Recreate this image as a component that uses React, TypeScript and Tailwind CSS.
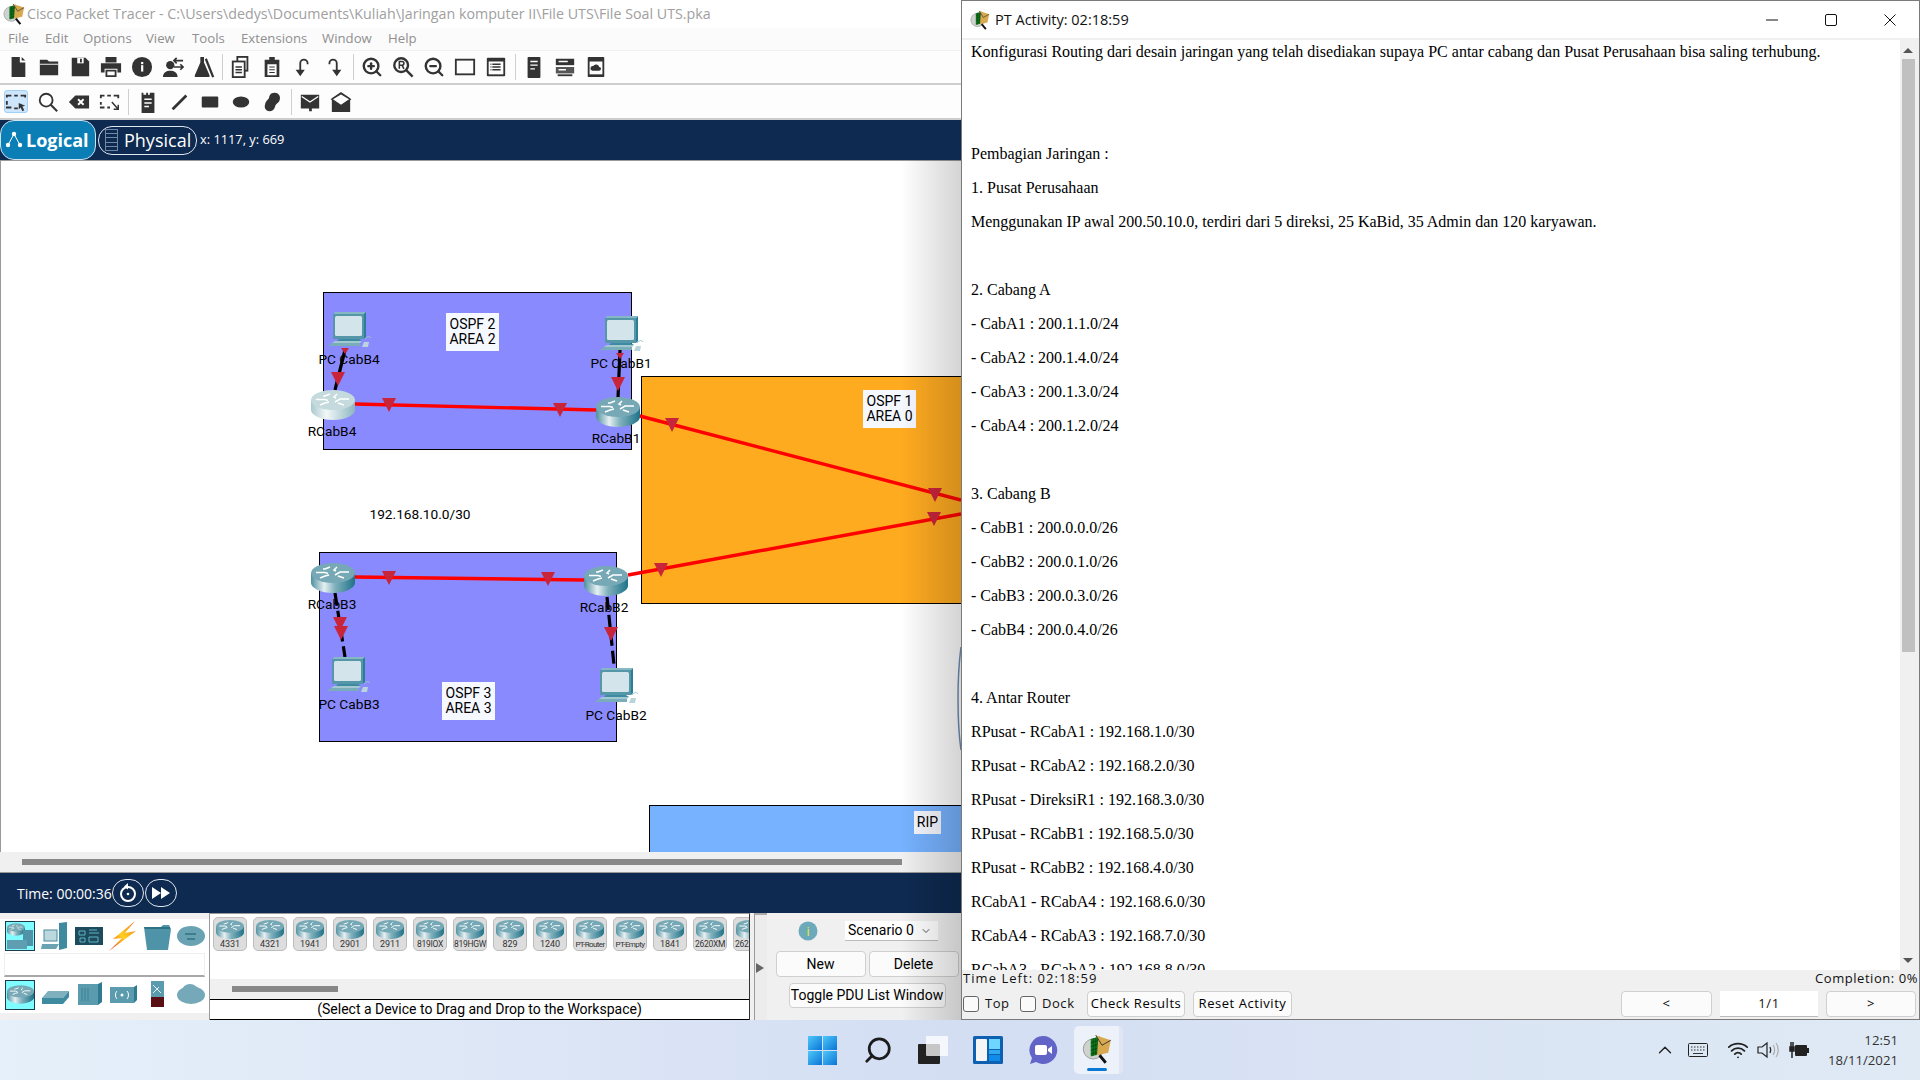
import React from "react";
import { ZoomIn, ZoomOut, Search, ChevronDown, ChevronUp, Wifi } from "lucide-react";

const D = "#333333";

function Router({ w = 44, h = 30, light = false }: { w?: number; h?: number; light?: boolean }) {
  return (
    <svg width={w} height={h} viewBox="0 0 44 30" className="block">
      <path d="M0 10v10c0 5 10 10 22 10s22-5 22-10V10z" fill={light ? "url(#rbl)" : "url(#rb)"} />
      <ellipse cx="22" cy="10" rx="22" ry="10" fill={light ? "#c4dadd" : "#76a9b5"} />
      <g stroke="#fff" strokeWidth="1.5" fill="none">
        <path d="M5 9.5h9l3 1" />
        <path d="M24 12l5-3h9" />
        <path d="M9 15l5-2 4-1" />
        <path d="M26 4l-3 3 2 1" />
        <path d="M19 4l-5 2h-2" />
        <path d="M27 13l6 2" />
      </g>
    </svg>
  );
}

function Pc() {
  return (
    <svg width="44" height="36" viewBox="0 0 44 36" className="block">
      <path d="M7 0h31l-2 2H6z" fill="#86b8c4" />
      <path d="M36 2l2-2v25l-2 2z" fill="#2b7f95" />
      <rect x="5" y="2" width="31" height="25" fill="#5596a9" />
      <rect x="7" y="4" width="27" height="20" rx="1.5" fill="#d3e4ea" />
      <path d="M11 27h20l3 2H9z" fill="#3d8ba0" />
      <path d="M7 29h27l-2 2H4z" fill="#a4c8d1" />
      <path d="M4 31h28v3H0z" fill="#79adba" />
      <path d="M37 27c2-3 5-3 6-1" stroke="#9cc3cd" strokeWidth="1" fill="none" />
      <path d="M36 30h5l-1 5h-6z" fill="#b9d4db" />
    </svg>
  );
}

function PtLogo({ s = 24 }: { s?: number }) {
  return (
    <svg width={s} height={s} viewBox="0 0 48 48" className="block">
      <circle cx="18" cy="24" r="16" fill="#cfd3cf" stroke="#9a9a9a" strokeWidth="1.5" />
      <path d="M14 8l14-4v28l-14 4z" fill="#0e7a1e" />
      <g stroke="#0a3b10" strokeWidth="1">
        <path d="M14 14l14-4M14 20l14-4M14 26l14-4M14 32l14-4M18 7v28M22 6v28M26 5v28" />
      </g>
      <path d="M22 2l24 8-4 20-18 4 2-26z" fill="#d8a94e" />
      <path d="M22 2l10 16 14-8" fill="none" stroke="#333" strokeWidth="1.5" />
      <path d="M28 34l10 12" stroke="#111" strokeWidth="4.5" />
    </svg>
  );
}

function Ico({ n }: { n: string }) {
  const white = "#fdfdfd";
  const c: Record<string, React.ReactNode> = {
    file: <path d="M5 1h9v6h6v16H5zM16 1l4 4h-4z" fill={D} />,
    folder: <><path d="M2 4h8l2 2h10v15H2z" fill={D} /><path d="M2 9h20" stroke={white} strokeWidth="1" /></>,
    save: <><path d="M3 2h15l4 4v16H3z" fill={D} /><rect x="9" y="2" width="7" height="6" fill={white} /><rect x="12" y="3" width="2" height="4" fill={D} /></>,
    print: <><path d="M6 1h12v6H6zM1 8h22v10h-4v-4H5v4H1z" fill={D} /><path d="M6 15h12v8H6zM8 17v4h8v-4z" fill={D} fillRule="evenodd" /></>,
    info: <><circle cx="12" cy="12" r="11" fill={D} /><rect x="11" y="10" width="2.4" height="7" fill={white} /><rect x="11" y="6.5" width="2.4" height="2.4" fill={white} /></>,
    user: <><circle cx="9" cy="10" r="4.5" fill={D} /><path d="M1 23c0-5 4-7 8-7s8 2 8 7z" fill={D} /><path d="M13 5h10M16 2l-3 3 3 3M13 12h10M20 9l3 3-3 3" stroke={D} strokeWidth="1.8" fill="none" /></>,
    flask: <><path d="M8 1h4v6l6 14v2H2v-2L8 7z" fill={D} /><path d="M14 3l8 20" stroke={D} strokeWidth="2.5" /></>,
    copy: <><rect x="8" y="1" width="11" height="15" fill="none" stroke={D} strokeWidth="2" /><rect x="3" y="6" width="13" height="17" fill={white} stroke={D} strokeWidth="2" /><path d="M6 12h7M6 15h7M6 18h7" stroke={D} strokeWidth="1.5" /></>,
    paste: <><path d="M4 4h5V1h6v3h5v19H4z" fill={D} /><rect x="7" y="9" width="10" height="12" fill={white} /><path d="M9 12h6M9 15h6M9 18h6" stroke={D} strokeWidth="1.3" /></>,
    undo: <><path d="M9 16V8a4 4 0 0 1 8 0v1" stroke={D} strokeWidth="2" fill="none" /><path d="M4 15h10l-5 7z" fill={D} /></>,
    redo: <><path d="M15 16V8a4 4 0 0 0-8 0v1" stroke={D} strokeWidth="2" fill="none" /><path d="M10 15h10l-5 7z" fill={D} /></>,
    zr: <><circle cx="10" cy="10" r="7.5" fill="none" stroke={D} strokeWidth="2.6" /><path d="M15.5 15.5l7 7" stroke={D} strokeWidth="2.6" /><path d="M8 14V6h3a2 2 0 0 1 0 4H8M11 10l2 4" stroke={D} strokeWidth="1.7" fill="none" /></>,
    win: <rect x="2" y="4" width="20" height="16" fill="none" stroke={D} strokeWidth="2" />,
    list: <><rect x="2" y="2" width="20" height="20" rx="1" fill={D} /><rect x="4" y="6" width="16" height="14" fill={white} /><path d="M8 9h9M8 12h9M8 15h9M6 9h1M6 12h1M6 15h1" stroke={D} strokeWidth="1.5" /></>,
    server: <><rect x="5" y="1" width="14" height="23" rx="1" fill={D} /><path d="M8 6h8M8 10h8M8 14h5" stroke={white} strokeWidth="1.5" /></>,
    stack: <><rect x="2" y="3" width="20" height="7" fill={D} /><rect x="2" y="12" width="20" height="7" fill="#555" /><path d="M5 6h10M5 15h8" stroke={white} strokeWidth="1.5" /><rect x="4" y="20" width="16" height="2" fill={D} /></>,
    cloud: <><rect x="3" y="1" width="18" height="22" rx="1" fill={D} /><rect x="5" y="6" width="14" height="14" fill={white} /><path d="M8 16a2.5 2.5 0 0 1 1-5 3.5 3.5 0 0 1 6.5 1 2 2 0 0 1 0 4z" fill={D} /></>,
    sel: <><path d="M2 7V5h5M10 5h4M17 5h5v2M2 11v4M2 19v-1h5M10 19h4" stroke={D} strokeWidth="2" fill="none" /><path d="M15 13l7 3-3 1 2 4-2 1-2-4-2 2z" fill={D} /></>,
    mag: <><circle cx="10" cy="10" r="7" fill="none" stroke={D} strokeWidth="2" /><path d="M15 15l7 7" stroke={D} strokeWidth="2.2" /></>,
    del: <><path d="M1 12l7-7h15v14H8z" fill={D} /><path d="M11 9l6 6M17 9l-6 6" stroke={white} strokeWidth="2" /></>,
    rsz: <><path d="M2 8V5h4M9 5h4M16 5h5v3M2 12v3M2 19v-1h4M9 18h3" stroke={D} strokeWidth="2" fill="none" /><path d="M14 12l7 8M21 15v5h-5" stroke={D} strokeWidth="1.6" fill="none" /></>,
    note: <><path d="M5 2h2v2h3V2h2v2h2V2h5v22H5z" fill={D} /><path d="M8 9h8M8 13h8M8 17h5" stroke={white} strokeWidth="1.6" /></>,
    line: <path d="M5 20L20 5" stroke={D} strokeWidth="3" />,
    rect: <rect x="3" y="6" width="18" height="12" rx="1" fill={D} />,
    oval: <ellipse cx="12" cy="12" rx="9" ry="6" fill={D} />,
    blob: <path d="M15 2c5 0 7 5 5 9-2 3-4 3-5 7-1 4-6 5-9 3-3-2-2-7 0-10 2-2 3-3 3-5 1-3 3-4 6-4z" fill={D} />,
    mail: <><path d="M2 4h20v15h-8v3h-3v-3H2z" fill={D} /><path d="M3 6l9 6 9-6" stroke={white} strokeWidth="1.5" fill="none" /></>,
    open: <><path d="M12 1l10 7v15H2V8z" fill={D} /><path d="M2 9l10 7 10-7-10-6z" fill={white} stroke={D} strokeWidth="1.5" /></>,
  };
  return <svg width="22" height="22" viewBox="0 0 24 24">{c[n]}</svg>;
}

function T({ n }: { n: string }) {
  return (
    <div className="w-[31px] h-[26px] flex items-center justify-center shrink-0">
      {n === "zi" ? <ZoomIn size={22} color={D} strokeWidth={2.6} /> : n === "zo" ? <ZoomOut size={22} color={D} strokeWidth={2.6} /> : <Ico n={n} />}
    </div>
  );
}

function MiniCat({ n }: { n: string }) {
  const m: Record<string, React.ReactNode> = {
    set: <><path d="M18 2l8-1v26l-8 2z" fill="#3e8ba0" /><rect x="3" y="9" width="13" height="11" fill="#bcd8df" stroke="#4a8a9c" /><path d="M1 23h17l-3 5H0z" fill="#6aa4b3" /></>,
    board: <><rect x="0" y="6" width="28" height="18" fill="#1d4b5c" /><path d="M4 10h6v4H4zM14 9h8M14 12h10M5 17h5v4H5zM14 16h9v5h-9z" stroke="#5fb3c6" fill="none" /></>,
    bolt: <path d="M26 0L4 18l9-1L0 30l27-20-11 2z" fill="url(#bolt)" />,
    fold: <><path d="M1 6h17l2-2h6l2 4-3 21H4z" fill="#4f93a8" /><path d="M1 6h26v2H2z" fill="#2e7286" /></>,
    cl: <><ellipse cx="14" cy="15" rx="14" ry="10" fill="#69a2b3" /><ellipse cx="9" cy="12" rx="7" ry="6" fill="#69a2b3" /><path d="M8 13h11M10 18h8" stroke="#2f7185" strokeWidth="1.5" /></>,
    sw: <><path d="M7 11h21L22 18H1z" fill="#7fb0be" /><path d="M1 18h21v6H1zM22 18l6-7v6l-6 7z" fill="#3e8ba0" /></>,
    hub: <><rect x="3" y="4" width="20" height="21" fill="#5b9bae" /><path d="M23 4l4-2v20l-4 3z" fill="#2f7a90" /><path d="M7 8v13M10 8v13M13 8v13" stroke="#3a8196" /></>,
    wl: <><rect x="1" y="7" width="24" height="16" fill="#5b9bae" /><path d="M25 7l3-2v15l-3 3z" fill="#2f7a90" /><path d="M8 11c-2 2-2 6 0 8M18 11c2 2 2 6 0 8" stroke="#fff" fill="none" /><circle cx="13" cy="15" r="1.500" fill="#fff" /></>,
    wan: <><rect x="8" y="1" width="13" height="17" fill="#5b9bae" /><rect x="8" y="17" width="13" height="10" fill="#5a0f14" /><path d="M10 5l8 8M10 13l6-6" stroke="#e6f0f2" /></>,
    cloud: <><ellipse cx="14" cy="15" rx="14" ry="9" fill="#75a8b8" /><ellipse cx="13" cy="11" rx="8" ry="7" fill="#75a8b8" /></>,
  };
  return <svg width="30" height="30" viewBox="0 0 28 30">{m[n]}</svg>;
}

function Tri({ x, y, big = true }: { x: number; y: number; big?: boolean }) {
  const w = big ? 7 : 4;
  const h = big ? 14 : 6;
  return <polygon points={`${x - w},${y} ${x + w},${y} ${x},${y + h}`} fill="#c8253a" />;
}

const lines = [
  "Konfigurasi Routing dari desain jaringan yang telah disediakan supaya PC antar cabang dan Pusat Perusahaan bisa saling terhubung.",
  "", "",
  "Pembagian Jaringan :",
  "1. Pusat Perusahaan",
  "Menggunakan IP awal 200.50.10.0, terdiri dari 5 direksi, 25 KaBid, 35 Admin dan 120 karyawan.",
  "",
  "2. Cabang A",
  "- CabA1 : 200.1.1.0/24",
  "- CabA2 : 200.1.4.0/24",
  "- CabA3 : 200.1.3.0/24",
  "- CabA4 : 200.1.2.0/24",
  "",
  "3. Cabang B",
  "- CabB1 : 200.0.0.0/26",
  "- CabB2 : 200.0.1.0/26",
  "- CabB3 : 200.0.3.0/26",
  "- CabB4 : 200.0.4.0/26",
  "",
  "4. Antar Router",
  "RPusat - RCabA1 : 192.168.1.0/30",
  "RPusat - RCabA2 : 192.168.2.0/30",
  "RPusat - DireksiR1 : 192.168.3.0/30",
  "RPusat - RCabB1 : 192.168.5.0/30",
  "RPusat - RCabB2 : 192.168.4.0/30",
  "RCabA1 - RCabA4 : 192.168.6.0/30",
  "RCabA4 - RCabA3 : 192.168.7.0/30",
  "RCabA3 - RCabA2 : 192.168.8.0/30",
];

const devices = ["4331", "4321", "1941", "2901", "2911", "819IOX", "819HGW", "829", "1240", "PT-Router", "PT-Empty", "1841", "2620XM", "2621XM"];

function Sep({ cls }: { cls: string }) {
  return <div className={`w-px h-[26px] bg-[#cfcfcf] shrink-0 ${cls}`} />;
}

function Lbl({ cls, children }: { cls: string; children: React.ReactNode }) {
  return <div className={`absolute -translate-x-1/2 font-['Roboto',sans-serif] text-[13.700px] leading-4 text-black whitespace-nowrap ${cls}`}>{children}</div>;
}

function Area({ cls, a, b }: { cls: string; a: string; b?: string }) {
  return (
    <div className={`absolute bg-[#f6f8ff] flex flex-col items-center justify-center font-['Roboto',sans-serif] text-[14px] leading-[15px] text-black ${cls}`}>
      <span>{a}</span>
      {b && <span>{b}</span>}
    </div>
  );
}

function Btn({ cls, children }: { cls: string; children: React.ReactNode }) {
  return <div className={`flex items-center justify-center bg-[#fbfbfb] border border-[#cfcfcf] rounded-[4px] text-black shrink-0 ${cls}`}>{children}</div>;
}

export default function App() {
  return (
    <div className="w-[1920px] h-[1080px] overflow-hidden flex flex-col bg-[#dfe7f4] font-['Open_Sans',sans-serif]">
      <svg className="absolute w-0 h-0">
        <defs>
          <linearGradient id="rb" x1="0" x2="1" y1="0" y2="0">
            <stop offset="0" stopColor="#4f8f9f" />
            <stop offset="0.3" stopColor="#e6f0f2" />
            <stop offset="0.55" stopColor="#7fb0bc" />
            <stop offset="1" stopColor="#1f7389" />
          </linearGradient>
          <linearGradient id="rbl" x1="0" x2="1" y1="0" y2="0">
            <stop offset="0" stopColor="#a9c9cf" />
            <stop offset="0.35" stopColor="#f2f7f8" />
            <stop offset="1" stopColor="#8db7c1" />
          </linearGradient>
          <linearGradient id="bolt" x1="0" x2="1" y1="1" y2="0">
            <stop offset="0" stopColor="#e8302a" />
            <stop offset="0.5" stopColor="#ffd21f" />
            <stop offset="1" stopColor="#f0701e" />
          </linearGradient>
        </defs>
      </svg>

      <div className="h-[1020px] flex shrink-0">
        {/* left window */}
        <div className="relative w-[961px] shrink-0 flex flex-col bg-white overflow-hidden">
          <div className="h-[28px] flex items-center pl-[3px] gap-[2px] bg-white shrink-0">
            <div className="w-[22px]"><PtLogo s={22} /></div>
            <span className="text-[14.250px] text-[#a0a0a0] whitespace-nowrap">Cisco Packet Tracer - C:\Users\dedys\Documents\Kuliah\Jaringan komputer II\File UTS\File Soal UTS.pka</span>
          </div>
          <div className="h-[22px] flex items-center pl-[8px] text-[13.200px] text-[#8f8f8f] bg-[#fbfbfb] shrink-0">
            <span className="w-[37px]">File</span>
            <span className="w-[38px]">Edit</span>
            <span className="w-[63px]">Options</span>
            <span className="w-[46px]">View</span>
            <span className="w-[49px]">Tools</span>
            <span className="w-[81px]">Extensions</span>
            <span className="w-[66px]">Window</span>
            <span>Help</span>
          </div>
          <div className="h-[35px] flex items-center pl-[2px] border-t border-[#f0f0f0] border-b-2 border-b-[#cdcdcd] bg-[#fdfdfd] shrink-0">
            {["file", "folder", "save", "print", "info", "user", "flask"].map((n) => <T key={n} n={n} />)}
            <Sep cls="ml-[3px] mr-[2px]" />
            {["copy", "paste", "undo", "redo"].map((n) => <T key={n} n={n} />)}
            <Sep cls="ml-[4px] mr-[2px]" />
            {["zi", "zr", "zo", "win", "list"].map((n) => <T key={n} n={n} />)}
            <Sep cls="ml-[4px] mr-[2px]" />
            {["server", "stack", "cloud"].map((n) => <T key={n} n={n} />)}
          </div>
          <div className="h-[35px] flex items-center pl-[1px] bg-[#fdfdfd] border-b-2 border-b-[#cdcdcd] shrink-0">
            <div className="w-[24px] h-[23px] ml-[3px] mr-[4px] bg-[#cde6fb] border border-[#9fd0f5] rounded-[3px] flex items-center justify-center"><Ico n="sel" /></div>
            {["mag", "del", "rsz"].map((n) => <T key={n} n={n} />)}
            <Sep cls="ml-[3px] mr-[3px]" />
            {["note", "line", "rect", "oval", "blob"].map((n) => <T key={n} n={n} />)}
            <Sep cls="ml-[4px] mr-[2px]" />
            {["mail", "open"].map((n) => <T key={n} n={n} />)}
          </div>
          <div className="h-[40px] bg-[#0e2a50] flex items-center shrink-0">
            <div className="w-[96px] h-[40px] rounded-[14px] bg-[#0b7fb5] border border-[#cfe3ee] flex items-center pl-[3px] gap-[2px] shrink-0">
              <svg width="20" height="24" viewBox="0 0 20 24">
                <path d="M4 17l6-11 6 11" stroke="#fff" strokeWidth="1" fill="none" />
                <circle cx="10" cy="6" r="2.200" fill="#fff" /><circle cx="4" cy="17" r="2.200" fill="#fff" /><circle cx="16" cy="17" r="2.200" fill="#fff" />
              </svg>
              <span className="text-[18px] font-bold text-white">Logical</span>
            </div>
            <div className="ml-[2px] w-[99px] h-[29px] rounded-[14px] border border-[#dfe7ee] flex items-center pl-[6px] gap-[6px] shrink-0">
              <div className="w-[13px] h-[22px] border border-[#6f88a6] flex flex-col justify-evenly">
                <div className="h-px bg-[#6f88a6]" /><div className="h-px bg-[#6f88a6]" /><div className="h-px bg-[#6f88a6]" /><div className="h-px bg-[#6f88a6]" />
              </div>
              <span className="text-[18px] text-white">Physical</span>
            </div>
            <span className="ml-[3px] text-[12.800px] text-white">x: 1117, y: 669</span>
          </div>

          {/* canvas */}
          <div className="relative flex-1 bg-white border-l border-t border-[#9a9a9a] overflow-hidden">
            <div className="absolute left-[322px] top-[131px] w-[309px] h-[158px] bg-[#8a8aff] border border-black" />
            <div className="absolute left-[640px] top-[215px] w-[330px] h-[228px] bg-[#ffab20] border border-black" />
            <div className="absolute left-[318px] top-[391px] w-[298px] h-[190px] bg-[#8a8aff] border border-black" />
            <div className="absolute left-[648px] top-[644px] w-[320px] h-[60px] bg-[#76b2ff] border border-black" />
            <svg className="absolute left-[-1px] top-[-1px]" width="961" height="692" viewBox="0 160 961 692">
              <path d="M961 647c-4 30-4 75 0 103" stroke="#6d8db5" strokeWidth="1.5" fill="none" />
              <g stroke="#000" strokeWidth="3.2">
                <path d="M345 350L335 390" />
                <path d="M620 350L618 398" />
                <path d="M335 593L345 657" strokeDasharray="13 5" />
                <path d="M607 597L614 665" strokeDasharray="13 5" />
              </g>
              <g stroke="#ff0000" strokeWidth="3.4" fill="none">
                <path d="M355 404L596 410" />
                <path d="M636 415L961 500" />
                <path d="M628 575L961 514" />
                <path d="M355 577L584 580" />
              </g>
              <Tri x={389} y={398} /><Tri x={560} y={403} /><Tri x={672} y={418} /><Tri x={935} y={488} />
              <Tri x={661} y={563} /><Tri x={934} y={512} /><Tri x={389} y={571} /><Tri x={548} y={572} />
              <Tri x={338} y={372} /><Tri x={345} y={348} big={false} /><Tri x={618} y={377} /><Tri x={620} y={353} big={false} />
              <Tri x={340} y={617} /><Tri x={341} y={626} /><Tri x={611} y={627} />
            </svg>
            <div className="absolute left-[310px] top-[229px]"><Router light /></div>
            <div className="absolute left-[595px] top-[236px]"><Router /></div>
            <div className="absolute left-[310px] top-[402px]"><Router /></div>
            <div className="absolute left-[583px] top-[405px]"><Router /></div>
            <div className="absolute left-[327px] top-[151px]"><Pc /></div>
            <div className="absolute left-[599px] top-[155px]"><Pc /></div>
            <div className="absolute left-[326px] top-[496px]"><Pc /></div>
            <div className="absolute left-[594px] top-[507px]"><Pc /></div>
            <Lbl cls="left-[348px] top-[190px]">PC CabB4</Lbl>
            <Lbl cls="left-[620px] top-[194px]">PC CabB1</Lbl>
            <Lbl cls="left-[331px] top-[262px]">RCabB4</Lbl>
            <Lbl cls="left-[615px] top-[269px]">RCabB1</Lbl>
            <Lbl cls="left-[331px] top-[435px]">RCabB3</Lbl>
            <Lbl cls="left-[603px] top-[438px]">RCabB2</Lbl>
            <Lbl cls="left-[348px] top-[535px]">PC CabB3</Lbl>
            <Lbl cls="left-[615px] top-[546px]">PC CabB2</Lbl>
            <Lbl cls="left-[419px] top-[345px]">192.168.10.0/30</Lbl>
            <Area cls="left-[445px] top-[152px] w-[53px] h-[38px]" a="OSPF 2" b="AREA 2" />
            <Area cls="left-[441px] top-[521px] w-[53px] h-[38px]" a="OSPF 3" b="AREA 3" />
            <Area cls="left-[862px] top-[229px] w-[53px] h-[38px]" a="OSPF 1" b="AREA 0" />
            <Area cls="left-[913px] top-[650px] w-[27px] h-[23px]" a="RIP" />
          </div>

          <div className="h-[21px] bg-[#f0f0f0] border-b border-[#9a9a9a] flex items-center pl-[22px] shrink-0">
            <div className="w-[880px] h-[6px] bg-[#888888]" />
          </div>
          <div className="h-[40px] bg-[#0e2a50] flex items-center pl-[17px] shrink-0">
            <span className="text-[14px] text-white">Time: 00:00:36</span>
            <div className="w-[32px] h-[28px] rounded-[14px] border border-[#dfe7ee] flex items-center justify-center">
              <svg width="18" height="20" viewBox="0 0 18 20"><circle cx="9" cy="11" r="7" stroke="#fff" strokeWidth="2" fill="none" /><circle cx="9" cy="11" r="1.3" fill="#fff" /><path d="M9 0l-4 3.500 4 3z" fill="#fff" /></svg>
            </div>
            <div className="ml-[1px] w-[32px] h-[28px] rounded-[14px] border border-[#dfe7ee] flex items-center justify-center">
              <svg width="20" height="14" viewBox="0 0 20 14"><path d="M1 1l9 6-9 6zM10 1l9 6-9 6z" fill="#fff" /></svg>
            </div>
          </div>

          {/* bottom */}
          <div className="h-[107px] flex bg-[#f0f0f0] shrink-0">
            <div className="w-[210px] pt-[6px] shrink-0 border-r border-[#9a9a9a]">
              <div className="bg-white h-[94px] flex flex-col">
                <div className="h-[32px] flex items-center pl-[5px] pt-[2px]">
                  <div className="relative w-[30px] h-[30px] bg-[#7ffcff] border border-[#1d3b4d] shrink-0 overflow-hidden">
                    <div className="absolute left-[1px] top-[1px]"><Router w={18} h={13} /></div>
                    <div className="absolute right-[1px] top-[8px] w-[10px] h-[16px] bg-[#4f93a8]" />
                    <div className="absolute left-[1px] bottom-[1px] w-[20px] h-[9px] bg-[#5f9db0]" />
                  </div>
                  <div className="w-[34px] ml-[3px] flex justify-center"><MiniCat n="set" /></div>
                  <div className="w-[34px] flex justify-center"><MiniCat n="board" /></div>
                  <div className="w-[34px] flex justify-center"><MiniCat n="bolt" /></div>
                  <div className="w-[34px] flex justify-center"><MiniCat n="fold" /></div>
                  <div className="w-[34px] flex justify-center"><MiniCat n="cl" /></div>
                </div>
                <div className="h-[24px] mx-[4px] mt-[2px] bg-white border border-[#eeeeee] border-b-2 border-b-[#a8a8a8] shrink-0" />
                <div className="h-[32px] flex items-center pl-[5px] pt-[3px]">
                  <div className="w-[30px] h-[30px] bg-[#7ffcff] border border-[#1d3b4d] flex items-center justify-center shrink-0"><Router w={27} h={19} /></div>
                  <div className="w-[34px] ml-[3px] flex justify-center"><MiniCat n="sw" /></div>
                  <div className="w-[34px] flex justify-center"><MiniCat n="hub" /></div>
                  <div className="w-[34px] flex justify-center"><MiniCat n="wl" /></div>
                  <div className="w-[34px] flex justify-center"><MiniCat n="wan" /></div>
                  <div className="w-[34px] flex justify-center"><MiniCat n="cloud" /></div>
                </div>
              </div>
            </div>
            <div className="w-[540px] shrink-0 flex flex-col border-t border-[#9a9a9a] border-r border-r-[#333]">
              <div className="h-[65px] bg-white flex pl-[3px] pt-[3px] gap-[6px] overflow-hidden">
                {devices.map((d) => (
                  <div key={d} className="w-[34px] h-[34px] shrink-0 bg-[#dddddd] border border-[#bdbdbd] rounded-[5px] flex flex-col items-center pt-[2px]">
                    <Router w={30} h={19} />
                    <span className={`text-[#333] font-['Roboto',sans-serif] leading-[11px] whitespace-nowrap ${d.length > 6 ? "text-[8px] tracking-[-0.6px]" : d.length === 6 ? "text-[8.5px] tracking-[-0.3px]" : "text-[9px]"}`}>{d}</span>
                  </div>
                ))}
              </div>
              <div className="h-[20px] bg-[#f0f0f0] flex items-center pl-[22px]">
                <div className="w-[106px] h-[6px] bg-[#888888]" />
              </div>
              <div className="h-[21px] bg-white border-y border-black flex items-center justify-center text-[14px] font-['Roboto',sans-serif] text-black">(Select a Device to Drag and Drop to the Workspace)</div>
            </div>
            <div className="w-[23px] shrink-0 flex">
              <div className="w-[5px] border-r border-[#9a9a9a] bg-[#f0f0f0]" />
              <div className="w-[12px] bg-[#ececec] flex items-center pl-[1px] border-t-2 border-t-[#aaaaaa]">
                <svg width="9" height="12" viewBox="0 0 9 12"><path d="M0 1l8 5-8 5z" fill="#666" /></svg>
              </div>
            </div>
            <div className="flex-1 flex flex-col items-center pt-[8px] text-[14px] font-['Roboto',sans-serif] text-black">
              <div className="h-[20px] flex items-center w-full">
                <svg width="20" height="20" viewBox="0 0 20 20" className="ml-[25px]">
                  <circle cx="10" cy="10" r="9.500" fill="#6ca9bb" /><text x="10" y="15" textAnchor="middle" fontSize="13" fontFamily="Roboto, sans-serif" fill="#e4e43a">i</text>
                </svg>
                <div className="ml-[27px] w-[93px] h-[20px] bg-white border-b border-[#bcbcbc] flex items-center pl-[3px] text-[14px] text-black justify-between pr-[6px]">
                  <span>Scenario 0</span>
                  <ChevronDown size={12} color="#555" />
                </div>
              </div>
              <div className="flex gap-[3px] mt-[10px]">
                <Btn cls="w-[90px] h-[26px]">New</Btn>
                <Btn cls="w-[90px] h-[26px]">Delete</Btn>
              </div>
              <Btn cls="w-[157px] h-[25px] mt-[6px]">Toggle PDU List Window</Btn>
            </div>
          </div>
          <div className="absolute right-0 top-[160px] bottom-0 w-[60px] bg-gradient-to-r from-transparent to-black/[0.17] pointer-events-none" />
        </div>

        {/* right window */}
        <div className="w-[959px] shrink-0 flex flex-col bg-[#f0f0f0] border-t border-l border-r border-b border-[#7a7a7a]">
          <div className="h-[37px] bg-white flex items-center pl-[8px] shrink-0">
            <PtLogo s={20} />
            <span className="ml-[5px] text-[14.500px] text-[#111]">PT Activity: 02:18:59</span>
            <svg width="14" height="14" viewBox="0 0 14 14" className="ml-auto"><path d="M1 7h12" stroke="#111" strokeWidth="1" /></svg>
            <svg width="14" height="14" viewBox="0 0 14 14" className="ml-[45px]"><rect x="1.500" y="1.500" width="11" height="11" rx="1.500" stroke="#111" strokeWidth="1" fill="none" /></svg>
            <svg width="14" height="14" viewBox="0 0 14 14" className="ml-[45px] mr-[22px]"><path d="M1.500 1.500l11 11M12.500 1.500l-11 11" stroke="#111" strokeWidth="1" /></svg>
          </div>
          <div className="h-[2px] shrink-0" />
          <div className="h-[930px] flex shrink-0">
            <div className="w-[938px] bg-white pt-[3px] pl-[9px] overflow-hidden font-['Liberation_Serif',serif] text-[16px] text-black shrink-0">
              {lines.map((l, i) => (
                <p key={i} className="h-[18px] leading-[18px] mb-[16px] whitespace-nowrap">{l}</p>
              ))}
            </div>
            <div className="flex-1 flex flex-col items-center pl-[1px] pr-[4px]">
              <svg width="10" height="6" viewBox="0 0 10 6" className="mt-[7px]"><path d="M0 6l5-5 5 5z" fill="#555" /></svg>
              <div className="w-[13px] h-[593px] bg-[#c0c0c0] mt-[6px]" />
              <svg width="10" height="6" viewBox="0 0 10 6" className="mt-auto mb-[6px]"><path d="M0 0l5 5 5-5z" fill="#555" /></svg>
            </div>
          </div>
          <div className="flex-1 pl-[1px] text-[13px] tracking-[0.55px] text-[#111]">
            <div className="h-[18px] flex items-center justify-between pr-[1px]">
              <span className="tracking-[1.050px]">Time Left: 02:18:59</span>
              <span>Completion: 0%</span>
            </div>
            <div className="h-[26px] flex items-center mt-[3px]">
              <div className="w-[16px] h-[16px] border border-[#666] rounded-[3px] bg-[#fafafa] shrink-0" />
              <span className="ml-[6px] w-[35px]">Top</span>
              <div className="w-[16px] h-[16px] border border-[#666] rounded-[3px] bg-[#fafafa] shrink-0" />
              <span className="ml-[6px] w-[45px]">Dock</span>
              <Btn cls="w-[98px] h-[26px]">Check Results</Btn>
              <Btn cls="w-[99px] h-[26px] ml-[8px]">Reset Activity</Btn>
              <Btn cls="w-[91px] h-[26px] ml-auto">&lt;</Btn>
              <div className="w-[98px] h-[26px] ml-[8px] bg-white border-b border-[#bbbbbb] flex items-center justify-center">1/1</div>
              <Btn cls="w-[90px] h-[26px] ml-[8px] mr-[3px]">&gt;</Btn>
            </div>
          </div>
        </div>
      </div>

      {/* taskbar */}
      <div className="h-[60px] flex items-center bg-gradient-to-r from-[#e6f0fa] via-[#d4def3] to-[#dfeaf5] relative shrink-0">
        <div className="w-[808px] shrink-0" />
        <svg width="29" height="29" viewBox="0 0 29 29" className="shrink-0">
          <defs><linearGradient id="w" x1="0" x2="1" y1="0" y2="1"><stop offset="0" stopColor="#4fc8fa" /><stop offset="1" stopColor="#0a74d6" /></linearGradient></defs>
          <rect x="0" y="0" width="14" height="14" fill="url(#w)" /><rect x="15" y="0" width="14" height="14" fill="url(#w)" /><rect x="0" y="15" width="14" height="14" fill="url(#w)" /><rect x="15" y="15" width="14" height="14" fill="url(#w)" />
        </svg>
        <div className="ml-[26px] shrink-0"><Search size={30} color="#1c1c1c" strokeWidth={2.2} className="-scale-x-100" /></div>
        <svg width="30" height="29" viewBox="0 0 30 29" className="ml-[25px] shrink-0">
          <rect x="0" y="8" width="22" height="20" rx="1" fill="#222" /><rect x="8" y="0" width="22" height="20" rx="1" fill="#fff" fillOpacity="0.75" />
        </svg>
        <svg width="30" height="28" viewBox="0 0 30 28" className="ml-[25px] shrink-0">
          <rect width="30" height="28" rx="1.500" fill="#0f60b0" /><rect x="3" y="3" width="11" height="22" rx="1" fill="#f5f5f5" /><rect x="16" y="3" width="11" height="10" fill="#6cd6ff" /><rect x="16" y="14" width="11" height="4" fill="#30a8f0" /><rect x="16" y="19" width="11" height="6" fill="#108be8" />
        </svg>
        <svg width="30" height="30" viewBox="0 0 30 30" className="ml-[25px] shrink-0">
          <path d="M15 1a14 14 0 1 1-7 26l-6 2 2-6A14 14 0 0 1 15 1z" fill="#6264c8" /><rect x="7" y="10" width="12" height="10" rx="2" fill="#fff" /><path d="M20 14l4-3v8l-4-3z" fill="#fff" />
        </svg>
        <div className="ml-[16px] w-[49px] h-[48px] rounded-[5px] bg-[#edf1fa] border-r-4 border-[#e0e6f4] flex flex-col items-center pt-[8px] shrink-0">
          <PtLogo s={30} />
          <div className="mt-[4px] w-[20px] h-[3px] rounded-full bg-[#0a78d4]" />
        </div>
        <ChevronUp size={22} color="#222" strokeWidth={1.5} className="ml-[531px] shrink-0" />
        <svg width="20" height="14" viewBox="0 0 20 14" className="ml-[12px] shrink-0"><rect x="0.500" y="0.500" width="19" height="13" rx="1" stroke="#222" fill="none" /><path d="M3 4h14M3 7h14" stroke="#333" strokeDasharray="1.500 1.500" /><path d="M5 10.500h10" stroke="#333" /></svg>
        <Wifi size={22} color="#222" className="ml-[19px] shrink-0" />
        <svg width="22" height="18" viewBox="0 0 22 18" className="ml-[8px] shrink-0">
          <path d="M1 6h4l5-4v14l-5-4H1z" fill="none" stroke="#222" strokeWidth="1.200" />
          <path d="M13 6c1 2 1 4 0 6" fill="none" stroke="#222" strokeWidth="1.300" />
          <path d="M16 4c2 3 2 7 0 10M19 2c3 4 3 10 0 14" fill="none" stroke="#aaa" strokeWidth="1.200" />
        </svg>
        <svg width="20" height="18" viewBox="0 0 20 18" className="ml-[10px] shrink-0"><rect x="6" y="4" width="12" height="11" rx="1" fill="#222" /><rect x="18" y="7" width="2" height="5" fill="#222" /><path d="M1 6h4v4H1zM2 1v5M4 1v5M3 10v7" stroke="#222" strokeWidth="1.500" fill="#222" /></svg>
        <div className="ml-auto mr-[22px] flex flex-col items-end text-[13.200px] leading-[20px] text-[#333] shrink-0">
          <span>12:51</span>
          <span>18/11/2021</span>
        </div>
      </div>
    </div>
  );
}
